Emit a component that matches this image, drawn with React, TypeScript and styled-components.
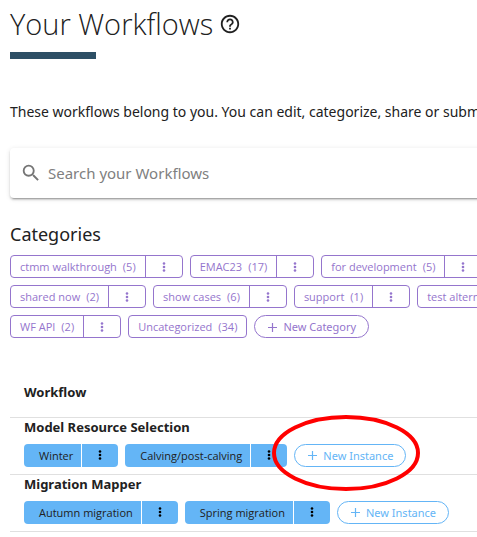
import React from "react";
import styled, { createGlobalStyle } from "styled-components";

const GlobalStyle = createGlobalStyle`
  * { box-sizing: border-box; }
  body {
    margin: 0;
    background: #fff;
    color: #212121;
    font-family: "Noto Sans", "Open Sans", sans-serif;
    overflow: hidden;
  }
  button, input { font: inherit; }
`;

const Page = styled.main`
  padding-left: 10px;
  overflow: hidden;
`;

const TitleRow = styled.header`
  display: flex;
  align-items: center;
  gap: 6px;
  height: 48px;
`;

const Title = styled.h1`
  margin: 0;
  font-family: "Open Sans", "Noto Sans", sans-serif;
  font-size: 29px;
  line-height: 48px;
  font-weight: 300;
`;

const HelpButton = styled.button`
  display: flex;
  padding: 0;
  border: 0;
  background: none;
  color: #212121;
`;

const TitleBar = styled.div`
  width: 86px;
  height: 7px;
  margin-top: 4px;
  background: #2d4f65;
`;

const Intro = styled.p`
  margin: 41px 0 0;
  font-size: 14px;
  line-height: 24px;
  white-space: nowrap;
`;

const SearchBox = styled.label`
  display: flex;
  align-items: center;
  gap: 6px;
  height: 50px;
  margin: 24px -10px 0 0;
  padding: 0 10px;
  border-radius: 4px;
  color: #757575;
  box-shadow: 0 3px 1px -2px rgba(0, 0, 0, 0.2), 0 2px 2px rgba(0, 0, 0, 0.14),
    0 1px 5px rgba(0, 0, 0, 0.12);
`;

const SearchInput = styled.input`
  flex: 1;
  min-width: 0;
  height: 22px;
  padding: 0;
  border: 0;
  outline: 0;
  background: none;
  font-size: 15px;
  &::placeholder { color: #808080; opacity: 1; }
`;

const SectionTitle = styled.h2`
  margin: 24px 0 0;
  font-size: 18px;
  line-height: 24px;
  font-weight: 400;
`;

const CategoryRows = styled.div`
  display: flex;
  flex-direction: column;
  gap: 7px;
  margin-top: 9px;
`;

const ChipRow = styled.div`
  display: flex;
  gap: 7px;
  white-space: nowrap;
`;

const Chip = styled.div<{ $filled?: boolean }>`
  display: flex;
  flex: none;
  height: 23px;
  border-radius: 4px;
  overflow: hidden;
  font-family: "Open Sans", "Noto Sans", sans-serif;
  font-size: 11px;
  color: ${(p) => (p.$filled ? "#212121" : "#9575cd")};
  background: ${(p) => (p.$filled ? "#64b5f6" : "#fff")};
  border: ${(p) => (p.$filled ? "0" : "1px solid #9575cd")};
`;

const ChipLabel = styled.button<{ $filled?: boolean }>`
  display: flex;
  align-items: center;
  gap: 6px;
  padding: ${(p) => (p.$filled ? "0 8px 0 15px" : "0 9px")};
  border: 0;
  background: none;
  color: inherit;
`;

const ChipMenu = styled.button<{ $filled?: boolean }>`
  display: flex;
  align-items: center;
  justify-content: center;
  width: 37px;
  padding: 0;
  border: 0;
  border-left: 1px solid ${(p) => (p.$filled ? "#fff" : "#9575cd")};
  background: none;
  color: ${(p) => (p.$filled ? "#000" : "#9575cd")};
`;

const AddButton = styled.button<{ $color: string }>`
  position: relative;
  display: flex;
  flex: none;
  align-items: center;
  gap: 6px;
  height: 23px;
  padding: 0 12px;
  border: 1px solid ${(p) => p.$color};
  border-radius: 12px;
  background: #fff;
  color: ${(p) => p.$color};
  font-size: 11px;
`;

const Highlight = styled.svg`
  position: absolute;
  left: -23px;
  top: -30px;
  width: 148px;
  height: 76px;
  pointer-events: none;
`;

const WorkflowTable = styled.table`
  width: 100%;
  margin-top: 28px;
  border-collapse: collapse;
`;

const HeadCell = styled.th`
  height: 51px;
  padding: 2px 0 0 14px;
  border-bottom: 1px solid #e0e0e0;
  text-align: left;
  font-size: 13px;
  font-weight: 700;
`;

const Cell = styled.td`
  padding: 0 0 7px 14px;
  border-bottom: 1px solid #e0e0e0;
`;

const WorkflowName = styled.h3`
  margin: 0 0 8px;
  font-size: 13px;
  line-height: 18px;
  font-weight: 700;
`;

const Dots = () => (
  <svg width="4" height="12" viewBox="0 0 4 12" fill="currentColor" aria-hidden="true">
    <circle cx="2" cy="2.5" r="1.3" />
    <circle cx="2" cy="6" r="1.3" />
    <circle cx="2" cy="9.5" r="1.3" />
  </svg>
);

const Plus = () => (
  <svg width="10" height="10" viewBox="0 0 10 10" stroke="currentColor" strokeWidth="1.2" aria-hidden="true">
    <path d="M1 5.500h9M5.500 1v9" />
  </svg>
);

type Category = { name: string; count: number; menu?: boolean };

const categoryRows: Category[][] = [
  [
    { name: "ctmm walkthrough", count: 5 },
    { name: "EMAC23", count: 17 },
    { name: "for development", count: 5 },
  ],
  [
    { name: "shared now", count: 2 },
    { name: "show cases", count: 6 },
    { name: "support", count: 1 },
    { name: "test alternatives", count: 1 },
  ],
  [
    { name: "WF API", count: 2 },
    { name: "Uncategorized", count: 34, menu: false },
  ],
];

const workflows = [
  { name: "Model Resource Selection", instances: ["Winter", "Calving/post-calving"], marked: true },
  { name: "Migration Mapper", instances: ["Autumn migration", "Spring migration"], marked: false },
];

export default function App() {
  return (
    <Page>
      <GlobalStyle />
      <TitleRow>
        <Title>Your Workflows</Title>
        <HelpButton aria-label="Help">
          <svg width="22" height="22" viewBox="0 0 24 24" fill="currentColor">
            <path d="M11 18h2v-2h-2v2zm1-16C6.48 2 2 6.48 2 12s4.480 10 10 10 10-4.480 10-10S17.520 2 12 2zm0 18c-4.410 0-8-3.590-8-8s3.590-8 8-8 8 3.590 8 8-3.590 8-8 8zm0-14c-2.210 0-4 1.790-4 4h2c0-1.100.900-2 2-2s2 .900 2 2c0 2-3 1.750-3 5h2c0-2.250 3-2.500 3-5 0-2.210-1.790-4-4-4z" />
          </svg>
        </HelpButton>
      </TitleRow>
      <TitleBar />
      <Intro>These workflows belong to you. You can edit, categorize, share or submit them.</Intro>
      <SearchBox>
        <svg width="22" height="22" viewBox="0 0 24 24" fill="currentColor" aria-hidden="true">
          <path d="M15.500 14h-.790l-.280-.270A6.471 6.471 0 0 0 16 9.500 6.500 6.500 0 1 0 9.500 16c1.610 0 3.090-.590 4.230-1.570l.270.280v.790l5 4.990L20.490 19l-4.990-5zm-6 0C7.010 14 5 11.990 5 9.500S7.010 5 9.500 5 14 7.010 14 9.500 11.990 14 9.500 14z" />
        </svg>
        <SearchInput type="text" aria-label="Search your Workflows" placeholder="Search your Workflows" />
      </SearchBox>
      <SectionTitle>Categories</SectionTitle>
      <CategoryRows>
        {categoryRows.map((row, i) => (
          <ChipRow key={i}>
            {row.map((c) => (
              <Chip key={c.name}>
                <ChipLabel>
                  <span>{c.name}</span>
                  <span>({c.count})</span>
                </ChipLabel>
                {c.menu !== false && (
                  <ChipMenu aria-label={`${c.name} menu`}>
                    <Dots />
                  </ChipMenu>
                )}
              </Chip>
            ))}
            {i === categoryRows.length - 1 && (
              <AddButton $color="#9575cd">
                <Plus />
                New Category
              </AddButton>
            )}
          </ChipRow>
        ))}
      </CategoryRows>
      <WorkflowTable>
        <thead>
          <tr>
            <HeadCell>Workflow</HeadCell>
          </tr>
        </thead>
        <tbody>
          {workflows.map((w) => (
            <tr key={w.name}>
              <Cell>
                <WorkflowName>{w.name}</WorkflowName>
                <ChipRow>
                  {w.instances.map((name) => (
                    <Chip key={name} $filled>
                      <ChipLabel $filled>{name}</ChipLabel>
                      <ChipMenu $filled aria-label={`${name} menu`}>
                        <Dots />
                      </ChipMenu>
                    </Chip>
                  ))}
                  <AddButton $color="#64b5f6">
                    <Plus />
                    New Instance
                    {w.marked && (
                      <Highlight viewBox="0 0 148 76" aria-hidden="true">
                        <ellipse cx="74" cy="38" rx="72" ry="36" fill="none" stroke="#f00" strokeWidth="4" />
                      </Highlight>
                    )}
                  </AddButton>
                </ChipRow>
              </Cell>
            </tr>
          ))}
        </tbody>
      </WorkflowTable>
    </Page>
  );
}
